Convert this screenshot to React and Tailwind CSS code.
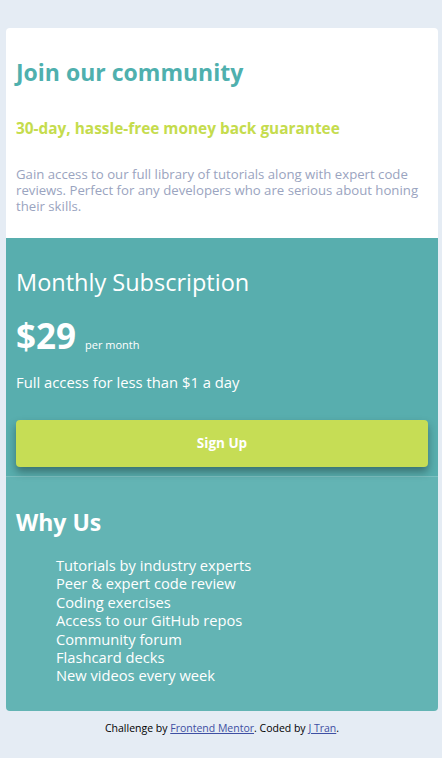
export default function App() {
  const perks = [
    'Tutorials by industry experts',
    'Peer & expert code review',
    'Coding exercises',
    'Access to our GitHub repos',
    'Community forum',
    'Flashcard decks',
    'New videos every week',
  ];

  return (
    <div className="min-h-[758px] bg-[#e5ecf4] pt-[28px] pl-[6px] pr-[4px] font-['Open_Sans',sans-serif]">
      <main className="rounded-[4px] overflow-hidden">
        {/* Intro */}
        <section className="bg-white px-[10px] pt-[29px] pb-[24px]">
          <h1 className="text-[23px] font-bold text-[#4fb0ae] leading-[30px]">Join our community</h1>
          <h2 className="mt-[32px] text-[15.4px] font-bold text-[#c5dc4d] leading-[20px]">30-day, hassle-free money back guarantee</h2>
          <p className="mt-[27px] text-[13.2px] text-[#9aa4c0] leading-[16px]">
            Gain access to our full library of tutorials along with expert code reviews. Perfect for any developers who are serious about honing their skills.
          </p>
        </section>

        {/* Subscription */}
        <section className="bg-[#58aeae] px-[10px] pt-[29px] pb-[9px]">
          <h2 className="text-[23.5px] text-white leading-[30px]">Monthly Subscription</h2>
          <div className="mt-[19px] flex items-baseline gap-[9px] text-white">
            <span className="text-[35px] font-bold leading-[40px]">$29</span>
            <span className="text-[11px]">per month</span>
          </div>
          <p className="mt-[16px] text-[14.8px] text-white leading-[20px]">Full access for less than $1 a day</p>
          <button className="mt-[28px] w-full h-[47px] rounded-[4px] bg-[#c6dd55] text-white text-[13.5px] font-bold shadow-[0_5px_8px_rgba(0,0,0,0.35)]">
            Sign Up
          </button>
        </section>

        {/* Why us */}
        <section className="bg-[#63b4b4] border-t border-[#7cc0c0] px-[10px] pt-[30px] pb-[26px]">
          <h2 className="text-[23px] font-bold text-white leading-[30px]">Why Us</h2>
          <ul className="mt-[19px] pl-[40px] text-[14.7px] text-white leading-[18.4px]">
            {perks.map((p) => (
              <li key={p}>{p}</li>
            ))}
          </ul>
        </section>
      </main>

      <footer className="pt-[10px] text-center text-[10.5px] text-black">
        Challenge by{' '}
        <a href="#" className="underline text-[#3e4fa3]">Frontend Mentor</a>. Coded by{' '}
        <a href="#" className="underline text-[#3e4fa3]">J Tran</a>.
      </footer>
    </div>
  );
}
